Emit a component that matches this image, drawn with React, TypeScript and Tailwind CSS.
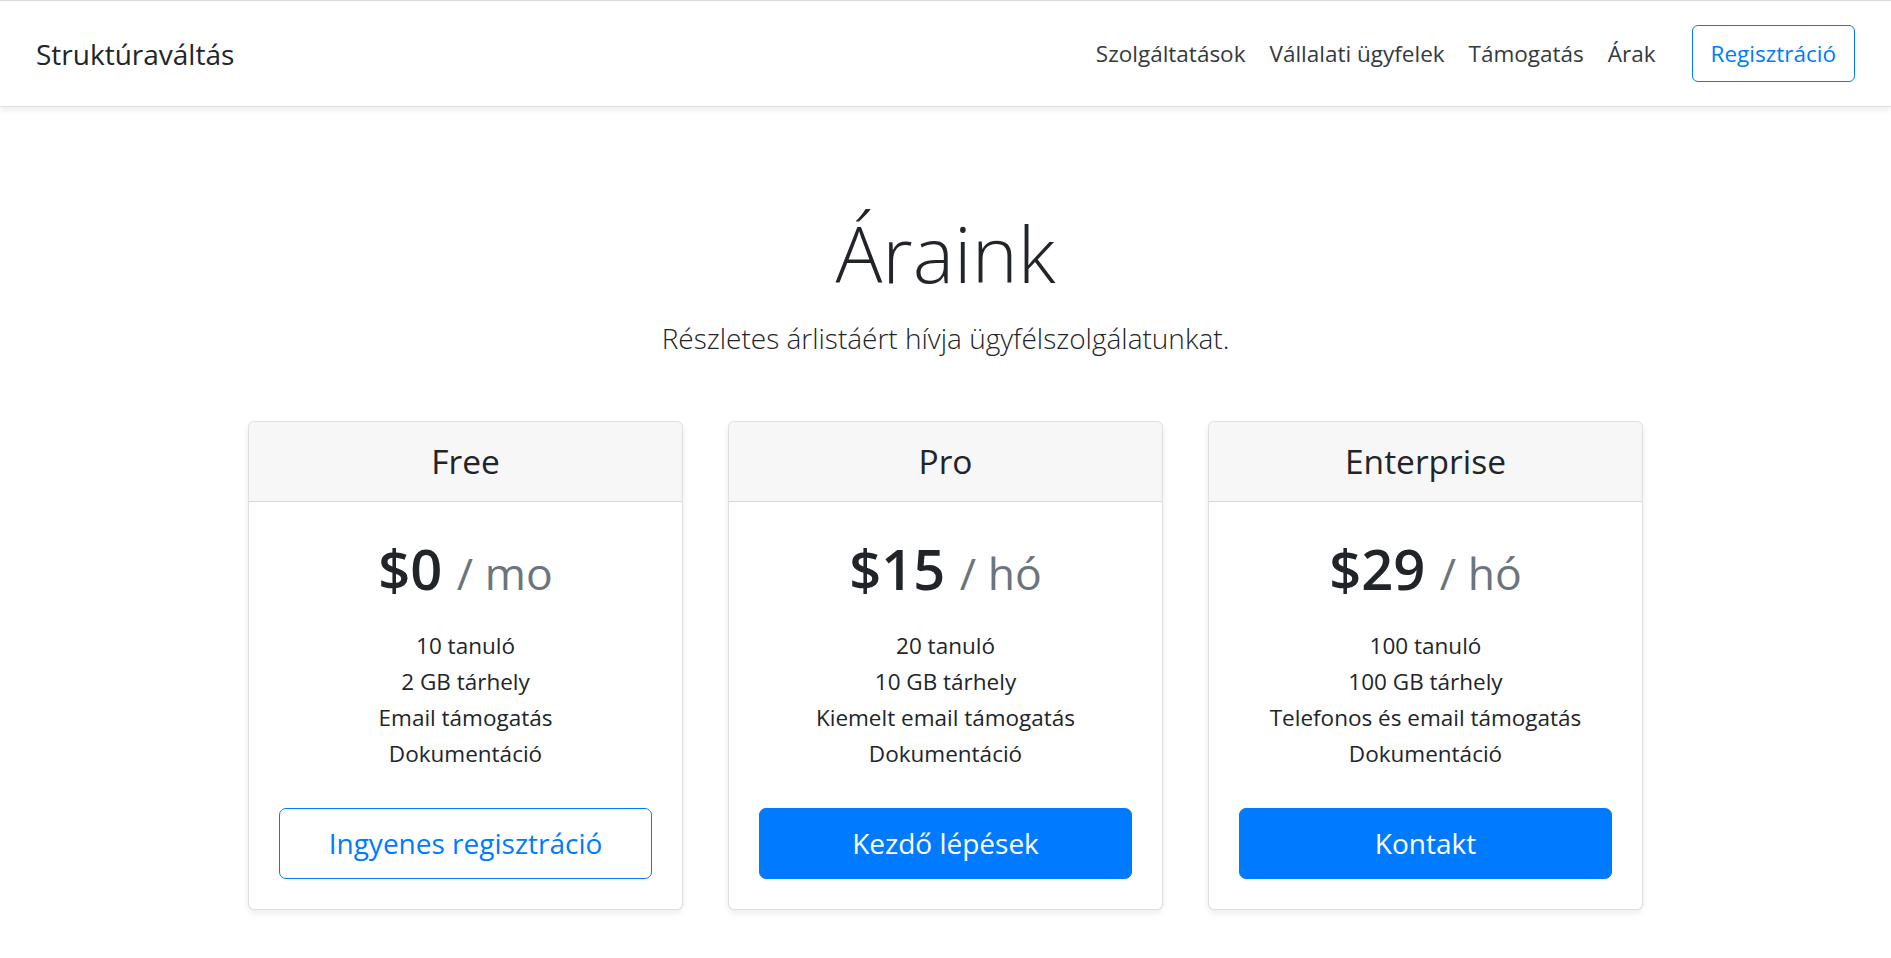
import React from "react";

const plans = [
  {
    name: "Free",
    price: "$0",
    unit: "/ mo",
    features: ["10 tanuló", "2 GB tárhely", "Email támogatás", "Dokumentáció"],
    cta: "Ingyenes regisztráció",
    outline: true,
  },
  {
    name: "Pro",
    price: "$15",
    unit: "/ hó",
    features: ["20 tanuló", "10 GB tárhely", "Kiemelt email támogatás", "Dokumentáció"],
    cta: "Kezdő lépések",
    outline: false,
  },
  {
    name: "Enterprise",
    price: "$29",
    unit: "/ hó",
    features: ["100 tanuló", "100 GB tárhely", "Telefonos és email támogatás", "Dokumentáció"],
    cta: "Kontakt",
    outline: false,
  },
];

export default function App() {
  return (
    <div className="min-h-screen bg-white text-[#212529] font-['Open_Sans','Noto_Sans',sans-serif]">
      <header className="relative z-10 flex items-center px-[36px] py-[24px] bg-white border-t border-t-[#d9d9d9] border-b border-b-[#dee2e6] shadow-[0_3px_6px_rgba(0,0,0,0.075)]">
        <h5 className="mr-auto text-[28px] leading-[36px] font-normal text-[#212529]">Struktúraváltás</h5>
        <nav className="mr-[24px] flex">
          {["Szolgáltatások", "Vállalati ügyfelek", "Támogatás", "Árak"].map((l) => (
            <a key={l} className="px-[12px] text-[22.5px] leading-[36px] text-[#343a40]">
              {l}
            </a>
          ))}
        </nav>
        <a className="border border-[#007bff] text-[#007bff] rounded-[6px] px-[18px] py-[9.5px] text-[22.5px] leading-[36px]">
          Regisztráció
        </a>
      </header>

      <div className="mt-[24px] mx-auto max-w-[1050px] px-[24px] pt-[72px] pb-[36px] text-center">
        <h1 className="text-[78px] leading-[100.8px] font-light mb-[12px]">Áraink</h1>
        <p className="text-[28px] leading-[45px] font-light mb-[24px]">
          Részletes árlistáért hívja ügyfélszolgálatunkat.
        </p>
      </div>

      <div className="mx-auto w-[1395px] grid grid-cols-3 gap-[45px] text-center">
        {plans.map((p) => (
          <div
            key={p.name}
            className="mb-[36px] flex flex-col rounded-[6px] border border-black/[.125] shadow-[0_3px_6px_rgba(0,0,0,0.075)] overflow-hidden bg-white"
          >
            <div className="bg-black/[.03] border-b border-black/[.125] py-[18px] px-[30px]">
              <h4 className="text-[33.5px] leading-[43.2px] font-normal">{p.name}</h4>
            </div>
            <div className="flex-1 flex flex-col p-[30px]">
              <h1 className="text-[56px] leading-[72px] font-semibold">
                {p.price}{" "}
                <small className="text-[44.5px] leading-[1.2] font-normal text-[#6c757d]">{p.unit}</small>
              </h1>
              <ul className="mt-[24px] mb-[36px] text-[22.5px] leading-[36px]">
                {p.features.map((f) => (
                  <li key={f}>{f}</li>
                ))}
              </ul>
              <button
                className={
                  p.outline
                    ? "w-full border border-[#007bff] text-[#007bff] bg-transparent rounded-[7px] py-[12px] px-[24px] text-[28px] leading-[45px]"
                    : "w-full border border-[#007bff] text-white bg-[#007bff] rounded-[7px] py-[12px] px-[24px] text-[28px] leading-[45px]"
                }
              >
                {p.cta}
              </button>
            </div>
          </div>
        ))}
      </div>
    </div>
  );
}
